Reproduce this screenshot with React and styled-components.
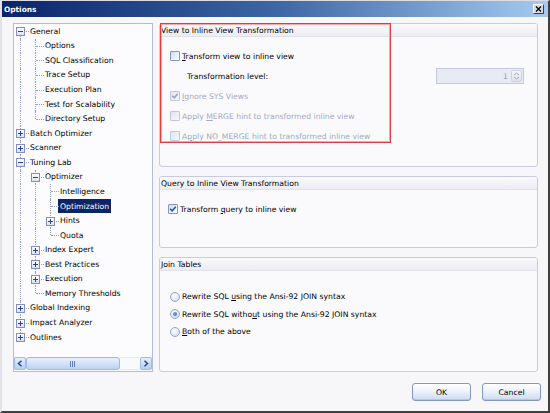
import React from 'react';
import styled, { createGlobalStyle } from 'styled-components';

const Global = createGlobalStyle`
  html, body { margin: 0; padding: 0; }
  body {
    width: 550px; height: 413px; overflow: hidden;
    font-family: "DejaVu Sans", Verdana, sans-serif;
    font-size: 7.7px; color: #000;
  }
  * { box-sizing: border-box; }
`;

const Window = styled.div`
  width: 550px; height: 413px;
  display: flex; flex-direction: column;
  background: #f7f7fa;
  border-top: 1px solid #dcdce4;
  border-left: 2px solid #e2e2e8;
  border-right: 2px solid #404040;
  border-bottom: 2px solid #404040;
`;

const TitleBar = styled.div`
  flex: 0 0 16px;
  display: flex; align-items: center; justify-content: space-between;
  padding: 0 4px 0 2px;
  background: linear-gradient(to right, #0a246a 0%, #3c66a4 50%, #a6caf0 100%);
`;

const Title = styled.span`
  font-weight: bold; font-size: 7.4px; color: #fff;
`;

const CloseBtn = styled.span`
  width: 11px; height: 10px;
  display: flex; align-items: center; justify-content: center;
  background: #d8dadf;
  border: 1px solid;
  border-color: #ffffff #404040 #404040 #ffffff;
`;

const Main = styled.div`
  flex: 0 0 349px;
  margin-top: 6px;
  padding: 0 10px 0 11px;
  display: grid;
  grid-template-columns: 140px 379px;
  column-gap: 6px;
`;

const TreePanel = styled.div`
  display: flex; flex-direction: column;
  border: 1px solid #b3bbd6;
  background: #fcfcfe;
  overflow: hidden;
`;

const TreeList = styled.div`
  flex: 1;
  display: flex; flex-direction: column;
`;

const Row = styled.div`
  height: 14.57px;
  display: flex; align-items: stretch;
  white-space: nowrap;
`;

const Guide = styled.span`
  position: relative;
  flex: 0 0 15px;
  &::before {
    content: '';
    position: absolute; left: 6px;
    border-left: 1px dotted #96a0c8;
    ${({ $t }) =>
      $t === 'pipe' || $t === 'tee'
        ? 'top: 0; bottom: 0;'
        : $t === 'elbow'
        ? 'top: 0; height: 50%;'
        : $t === 'start'
        ? 'top: 50%; bottom: 0;'
        : 'display: none;'}
  }
  &::after {
    content: '';
    position: absolute; left: 7px; width: 8px; top: 50%;
    border-top: 1px dotted #96a0c8;
    ${({ $t }) => ($t === 'pipe' || $t === 'blank' ? 'display: none;' : '')}
  }
`;

const Expander = styled.span`
  position: absolute; z-index: 1;
  left: 2px; top: 50%; margin-top: -4px;
  width: 9px; height: 9px;
  border: 1px solid #8490bb;
  background: linear-gradient(#ffffff, #d9e0f0);
  &::before {
    content: '';
    position: absolute; left: 1px; top: 3px; width: 5px; height: 1px;
    background: #2a4590;
  }
  &::after {
    content: '';
    position: absolute; left: 3px; top: 1px; width: 1px; height: 5px;
    background: #2a4590;
    ${({ $open }) => ($open ? 'display: none;' : '')}
  }
`;

const Label = styled.span`
  display: flex; align-items: center;
  margin-left: -1px;
  padding: 0 2px;
  ${({ $sel }) => ($sel ? 'background: #0c2466; color: #fff;' : '')}
`;

const HScroll = styled.div`
  flex: 0 0 13px;
  margin-bottom: 1px;
  display: flex;
  background: #f1f5fc;
`;

const ArrowBtn = styled.span`
  flex: 0 0 12px;
  display: flex; align-items: center; justify-content: center;
  border: 1px solid #9fbbe6;
  border-radius: 2px;
  background: linear-gradient(#e4eefc, #b6cff2);
`;

const Thumb = styled.span`
  flex: 0 0 94px;
  display: flex; align-items: center; justify-content: center;
  border: 1px solid #9db8e4;
  border-radius: 3px;
  background: linear-gradient(#e8f0fd, #bcd3f3);
`;

const Track = styled.span`
  flex: 1;
  border-top: 1px solid #e2e9f6;
  border-bottom: 1px solid #e2e9f6;
  background: #f8fafe;
`;

const RightCol = styled.div`
  position: relative;
  display: flex; flex-direction: column;
  gap: 9px;
`;

const Panel = styled.section`
  flex: ${({ $h }) => ($h ? `0 0 ${$h}px` : '1')};
  display: flex; flex-direction: column;
  border: 1px solid #c9cce0;
  border-radius: 3px;
  background: #fafafc;
  overflow: hidden;
`;

const PanelHead = styled.div`
  flex: 0 0 13px;
  display: flex; align-items: center;
  padding-left: 1px;
  background: linear-gradient(#fafafd, #ececf2);
  border-bottom: 1px solid #e0e1ea;
`;

const PanelBody = styled.div`
  display: flex; flex-direction: column;
  padding: ${({ $pt }) => $pt}px 0 0 ${({ $pl }) => $pl}px;
`;

const OptRow = styled.div`
  height: ${({ $h }) => $h || 20}px;
  display: flex; align-items: center;
  padding-left: ${({ $indent }) => $indent || 0}px;
  color: ${({ $disabled }) => ($disabled ? '#a6a8c0' : '#000')};
  white-space: nowrap;
`;

const Check = styled.span`
  flex: 0 0 10px; height: 10px;
  margin-right: 2px;
  display: flex; align-items: center; justify-content: center;
  border: 1px solid ${({ $disabled }) => ($disabled ? '#c2c7dc' : '#8797c3')};
  border-radius: 1px;
  background: ${({ $disabled }) =>
    $disabled ? 'linear-gradient(135deg, #e1e5f1, #f7f8fb)' : 'linear-gradient(135deg, #cfdbf0, #ffffff)'};
`;

const Radio = styled.span`
  flex: 0 0 10px; height: 10px;
  margin-right: 2px;
  border-radius: 50%;
  border: 1px solid #94a6d0;
  background: radial-gradient(circle at 40% 35%, #ffffff 0%, #e2eaf8 55%, #c3d3ee 100%);
  display: flex; align-items: center; justify-content: center;
  &::after {
    content: '';
    width: 4px; height: 4px; border-radius: 50%;
    background: radial-gradient(circle at 40% 40%, #7ba3ea, #2d5ec0);
    ${({ $on }) => ($on ? '' : 'display: none;')}
  }
`;

const Spin = styled.div`
  margin-left: auto; margin-right: 13px;
  width: 88px; height: 16px;
  display: flex; align-items: center;
  border: 1px solid #c5c9df;
  background: #e9ebf4;
`;

const SpinVal = styled.span`
  flex: 1; text-align: right; padding-right: 3px;
  color: #9a9db8;
`;

const SpinBtn = styled.span`
  width: 11px; height: 12px; margin-right: 1px;
  display: flex; align-items: center; justify-content: center;
  border: 1px solid #cdd1e4;
  border-radius: 2px;
  background: linear-gradient(#f5f6fa, #dfe2ee);
`;

const Highlight = styled.div`
  position: absolute;
  left: 1px; top: 0;
  width: 231px; height: 120px;
  border: 1px solid #e23b3b;
  box-shadow: inset 0 0 0 1px #f4aaaa;
  pointer-events: none;
`;

const Footer = styled.div`
  flex: 1;
  display: flex; justify-content: flex-end; align-items: flex-start;
  gap: 11px;
  padding: 11px 7px 0 0;
`;

const Button = styled.button`
  width: 59px; height: 18px; padding: 0;
  font: inherit; color: #000;
  border: 1px solid #8597c0;
  border-radius: 3px;
  background: linear-gradient(#ffffff 0%, #f0f4fb 40%, #cddcf2 100%);
  box-shadow: inset 0 -1px 0 #b3c6e5, inset 0 1px 0 #ffffff;
`;

const tree = [
  {
    label: 'General', open: true,
    children: ['Options', 'SQL Classification', 'Trace Setup', 'Execution Plan', 'Test for Scalability', 'Directory Setup'].map((l) => ({ label: l })),
  },
  { label: 'Batch Optimizer', children: [] },
  { label: 'Scanner', children: [] },
  {
    label: 'Tuning Lab', open: true,
    children: [
      {
        label: 'Optimizer', open: true,
        children: [
          { label: 'Intelligence' },
          { label: 'Optimization', selected: true },
          { label: 'Hints', children: [] },
          { label: 'Quota' },
        ],
      },
      { label: 'Index Expert', children: [] },
      { label: 'Best Practices', children: [] },
      { label: 'Execution', children: [] },
      { label: 'Memory Thresholds' },
    ],
  },
  { label: 'Global Indexing', children: [] },
  { label: 'Impact Analyzer', children: [] },
  { label: 'Outlines', children: [] },
];

function flatten(nodes, prefix = [], root = true, out = []) {
  nodes.forEach((n, i) => {
    const last = i === nodes.length - 1;
    let conn;
    if (root && i === 0) conn = last ? 'none' : 'start';
    else conn = last ? 'elbow' : 'tee';
    out.push({ ...n, guides: prefix, conn });
    if (n.children && n.open) flatten(n.children, [...prefix, last ? 'blank' : 'pipe'], false, out);
  });
  return out;
}

const rows = flatten(tree);

const CheckMark = ({ color }) => (
  <svg width="8" height="8" viewBox="0 0 8 8">
    <polyline points="1.2,3.8 3.2,5.8 6.8,1.8" fill="none" stroke={color} strokeWidth="1.5" />
  </svg>
);

function CheckRow({ checked, disabled, indent, h, children }) {
  return (
    <OptRow $disabled={disabled} $indent={indent} $h={h}>
      <Check $disabled={disabled}>{checked && <CheckMark color={disabled ? '#97a1c6' : '#2150b4'} />}</Check>
      <span>{children}</span>
    </OptRow>
  );
}

function RadioRow({ on, children }) {
  return (
    <OptRow $h={17.5}>
      <Radio $on={on} />
      <span>{children}</span>
    </OptRow>
  );
}

export default function App() {
  return (
    <>
      <Global />
      <Window>
        <TitleBar>
          <Title>Options</Title>
          <CloseBtn>
            <svg width="7" height="6" viewBox="0 0 7 6">
              <path d="M1 0.5 L6 5.5 M6 0.5 L1 5.5" stroke="#000" strokeWidth="1.2" />
            </svg>
          </CloseBtn>
        </TitleBar>
        <Main>
          <TreePanel>
            <TreeList>
              {rows.map((r) => (
                <Row key={r.label}>
                  {r.guides.map((g, i) => (
                    <Guide key={i} $t={g} />
                  ))}
                  <Guide $t={r.conn}>{r.children && <Expander $open={r.open} />}</Guide>
                  <Label $sel={r.selected}>{r.label}</Label>
                </Row>
              ))}
            </TreeList>
            <HScroll>
              <ArrowBtn>
                <svg width="6" height="7" viewBox="0 0 6 7">
                  <polyline points="4.5,0.8 1.5,3.5 4.5,6.2" fill="none" stroke="#24479a" strokeWidth="1.5" />
                </svg>
              </ArrowBtn>
              <Thumb>
                <svg width="6" height="6" viewBox="0 0 6 6">
                  <path d="M0.5 0 V6 M2.5 0 V6 M4.5 0 V6" stroke="#5d7fc0" strokeWidth="1" />
                </svg>
              </Thumb>
              <Track />
              <ArrowBtn>
                <svg width="6" height="7" viewBox="0 0 6 7">
                  <polyline points="1.5,0.8 4.5,3.5 1.5,6.2" fill="none" stroke="#24479a" strokeWidth="1.5" />
                </svg>
              </ArrowBtn>
            </HScroll>
          </TreePanel>
          <RightCol>
            <Panel $h={144}>
              <PanelHead>View to Inline View Transformation</PanelHead>
              <PanelBody $pt={9} $pl={10}>
                <CheckRow><u>T</u>ransform view to inline view</CheckRow>
                <OptRow $indent={17}>
                  <span>Transformation level:</span>
                  <Spin>
                    <SpinVal>1</SpinVal>
                    <SpinBtn>
                      <svg width="7" height="8" viewBox="0 0 7 8">
                        <polyline points="1,3 3.5,1 6,3" fill="none" stroke="#a3a7c0" strokeWidth="1" />
                        <polyline points="1,5 3.5,7 6,5" fill="none" stroke="#a3a7c0" strokeWidth="1" />
                      </svg>
                    </SpinBtn>
                  </Spin>
                </OptRow>
                <CheckRow checked disabled><u>I</u>gnore SYS Views</CheckRow>
                <CheckRow disabled>Apply <u>M</u>ERGE hint to transformed inline view</CheckRow>
                <CheckRow disabled>A<u>p</u>ply NO_MERGE hint to transformed inline view</CheckRow>
              </PanelBody>
            </Panel>
            <Panel $h={72}>
              <PanelHead>Query to Inline View Transformation</PanelHead>
              <PanelBody $pt={9} $pl={8}>
                <CheckRow checked>Transform <u>q</u>uery to inline view</CheckRow>
              </PanelBody>
            </Panel>
            <Panel>
              <PanelHead>Join Tables</PanelHead>
              <PanelBody $pt={17} $pl={10}>
                <RadioRow>Rewrite SQL <u>u</u>sing the Ansi-92 JOIN syntax</RadioRow>
                <RadioRow on>Rewrite SQL witho<u>u</u>t using the Ansi-92 JOIN syntax</RadioRow>
                <RadioRow><u>B</u>oth of the above</RadioRow>
              </PanelBody>
            </Panel>
            <Highlight />
          </RightCol>
        </Main>
        <Footer>
          <Button>OK</Button>
          <Button>Cancel</Button>
        </Footer>
      </Window>
    </>
  );
}
